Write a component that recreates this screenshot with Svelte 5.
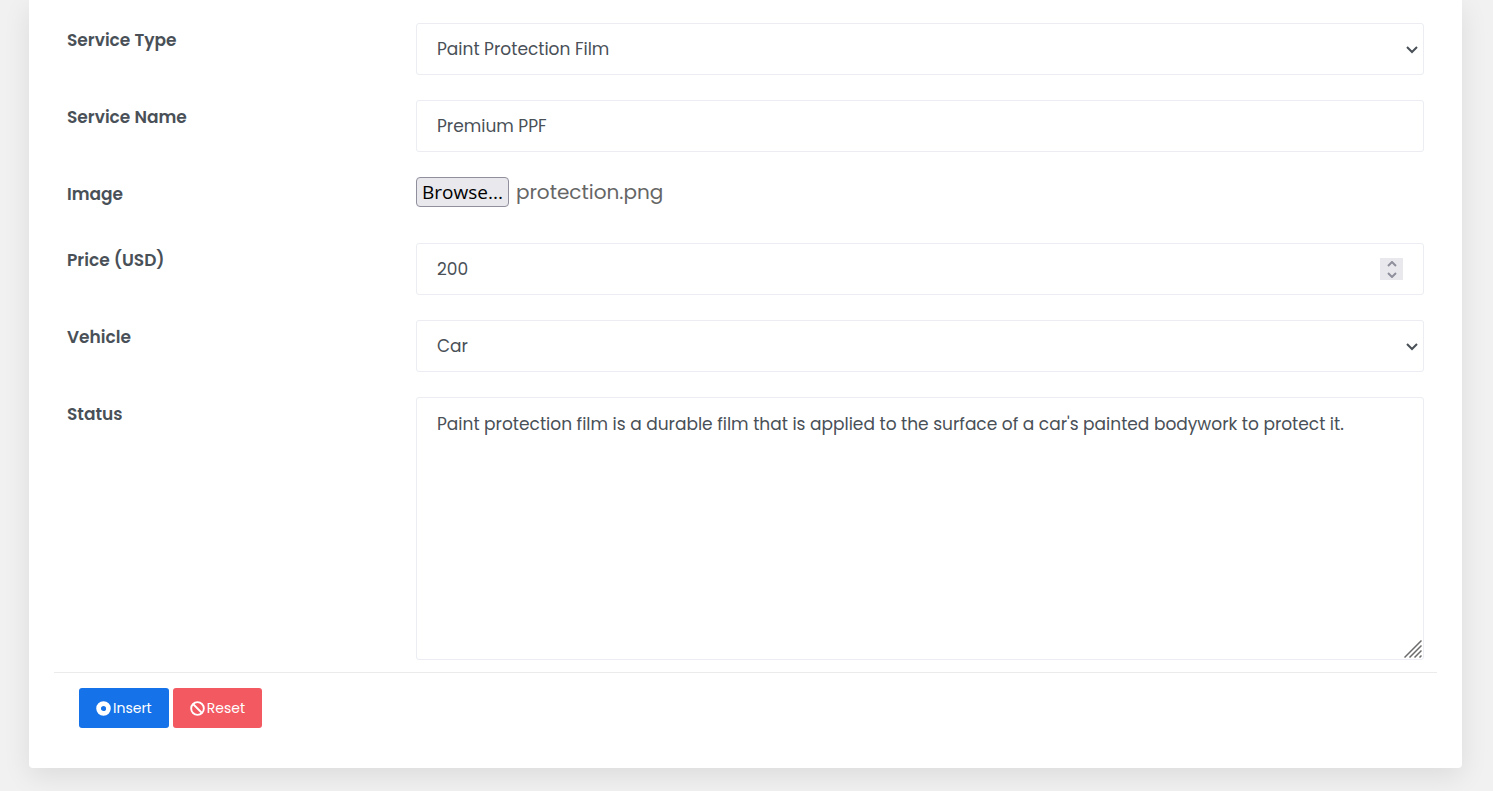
<script>
  let serviceType = $state('Paint Protection Film');
  let serviceName = $state('Premium PPF');
  let fileName = $state('protection.png');
  let price = $state(200);
  let vehicle = $state('Car');
  let status = $state("Paint protection film is a durable film that is applied to the surface of a car's painted bodywork to protect it.");

  function pickFile(event) {
    const file = event.currentTarget.files[0];
    if (file) fileName = file.name;
  }

  function clear() {
    serviceName = '';
    fileName = '';
    price = 0;
    status = '';
  }
</script>

{#snippet chevron()}
  <svg class="chevron" viewBox="0 0 12 8" aria-hidden="true"><path d="M1 1 6 6l5-5" /></svg>
{/snippet}

<main class="card">
  <form onsubmit={(e) => e.preventDefault()}>
    <div class="fields">
      <label class="name" for="service-type">Service Type</label>
      <div class="control">
        <select id="service-type" class="box" bind:value={serviceType}>
          <option>Paint Protection Film</option>
        </select>
        {@render chevron()}
      </div>

      <label class="name" for="service-name">Service Name</label>
      <div class="control">
        <input id="service-name" class="box" type="text" bind:value={serviceName} />
      </div>

      <label class="name" for="image">Image</label>
      <div class="control file">
        <input id="image" class="picker" type="file" accept="image/*" onchange={pickFile} />
        <span class="browse">Browse...</span>
        <span class="filename">{fileName}</span>
      </div>

      <label class="name" for="price">Price (USD)</label>
      <div class="control">
        <input id="price" class="box" type="number" bind:value={price} />
        <div class="spinner">
          <button type="button" aria-label="Increase price" onclick={() => price++}>
            <svg viewBox="0 0 10 6" aria-hidden="true"><path d="M1 5l4-4 4 4" /></svg>
          </button>
          <button type="button" aria-label="Decrease price" onclick={() => price--}>
            <svg viewBox="0 0 10 6" aria-hidden="true"><path d="M1 1l4 4 4-4" /></svg>
          </button>
        </div>
      </div>

      <label class="name" for="vehicle">Vehicle</label>
      <div class="control">
        <select id="vehicle" class="box" bind:value={vehicle}>
          <option>Car</option>
        </select>
        {@render chevron()}
      </div>

      <label class="name" for="status">Status</label>
      <div class="control">
        <textarea id="status" class="box" rows="8" bind:value={status}></textarea>
        <svg class="grip" viewBox="0 0 18 18" aria-hidden="true">
          <path d="M.5 17.500l17-17M5.500 17.500l12-12M10.500 17.500l7-7M15.500 17.500l2-2" />
        </svg>
      </div>
    </div>

    <div class="actions">
      <button class="btn insert" type="submit">
        <svg viewBox="0 0 16 16" aria-hidden="true"><circle cx="8" cy="8" r="5.250" stroke-width="5" /></svg>
        Insert
      </button>
      <button class="btn reset" type="button" onclick={clear}>
        <svg viewBox="0 0 16 16" aria-hidden="true"><circle cx="8" cy="8" r="6.750" stroke-width="2" /><path d="M3.500 3.500l9 9" stroke-width="2" /></svg>
        Reset
      </button>
    </div>
  </form>
</main>

<style>
  :global(body) {
    background: #f1f1f1;
    font-family: Poppins, Inter, sans-serif;
  }
  .card {
    margin: 0 31px 23px 29px;
    padding: 23px 25px 40px;
    background: #fff;
    border-radius: 0 0 4px 4px;
    box-shadow: 0 8px 28px rgba(0, 0, 0, 0.09);
  }
  .fields {
    display: grid;
    grid-template-columns: 349fr 1008fr;
    row-gap: 25px;
    padding: 0 13px 12px;
    border-bottom: 1px solid #ebebeb;
  }
  .name {
    justify-self: start;
    align-self: start;
    font-size: 17px;
    line-height: 34px;
    font-weight: 600;
    color: #495057;
  }
  .control {
    position: relative;
    display: flex;
    min-width: 0;
  }
  .box {
    appearance: none;
    box-sizing: border-box;
    width: 100%;
    height: 52px;
    margin: 0;
    padding: 0 20px;
    border: 1px solid #ebedf2;
    border-radius: 3px;
    background: #fff;
    color: #495057;
    font: 400 17px/26px Poppins, Inter, sans-serif;
  }
  .box:focus-visible {
    outline: 1px solid #1572e8;
  }
  input[type='number'] {
    appearance: textfield;
  }
  input[type='number']::-webkit-inner-spin-button {
    display: none;
  }
  textarea.box {
    height: 263px;
    padding: 13px 20px;
    resize: none;
  }
  .chevron {
    position: absolute;
    right: 6px;
    top: 23px;
    width: 12px;
    height: 8px;
    fill: none;
    stroke: #495057;
    stroke-width: 2;
    pointer-events: none;
  }
  .file {
    align-items: center;
    gap: 7px;
    height: 30px;
    margin-bottom: 11px;
  }
  .picker {
    position: absolute;
    inset: 0;
    width: 100%;
    opacity: 0;
  }
  .browse {
    box-sizing: border-box;
    height: 30px;
    padding: 0 5px;
    border: 1px solid #8f8f9d;
    border-radius: 4px;
    background: #e9e9ed;
    color: #000;
    font: 19px/28px 'Open Sans', sans-serif;
  }
  .filename {
    font-size: 20px;
    line-height: 32px;
    color: #666;
  }
  .spinner {
    position: absolute;
    right: 21px;
    top: 15px;
    display: flex;
    flex-direction: column;
    width: 23px;
    height: 22px;
    background: #e9e9ed;
  }
  .spinner button {
    flex: 1;
    display: flex;
    align-items: center;
    justify-content: center;
    padding: 0;
    border: 0;
    background: none;
  }
  .spinner svg {
    width: 10px;
    height: 6px;
    fill: none;
    stroke: #8f8f9d;
    stroke-width: 2;
  }
  .grip {
    position: absolute;
    right: 2px;
    bottom: 2px;
    width: 18px;
    height: 18px;
    fill: none;
    stroke: #6c6c6c;
    stroke-width: 1.500;
    pointer-events: none;
  }
  .actions {
    display: flex;
    gap: 4px;
    padding: 15px 25px 0;
  }
  .btn {
    display: flex;
    align-items: center;
    gap: 2px;
    height: 40px;
    padding: 0 17px;
    border: 0;
    border-radius: 3px;
    color: #fff;
    font: 400 14px/20px Poppins, Inter, sans-serif;
  }
  .btn svg {
    width: 15px;
    height: 15px;
    fill: none;
    stroke: #fff;
  }
  .insert {
    background: #1572e8;
  }
  .reset {
    background: #f25961;
  }
</style>
